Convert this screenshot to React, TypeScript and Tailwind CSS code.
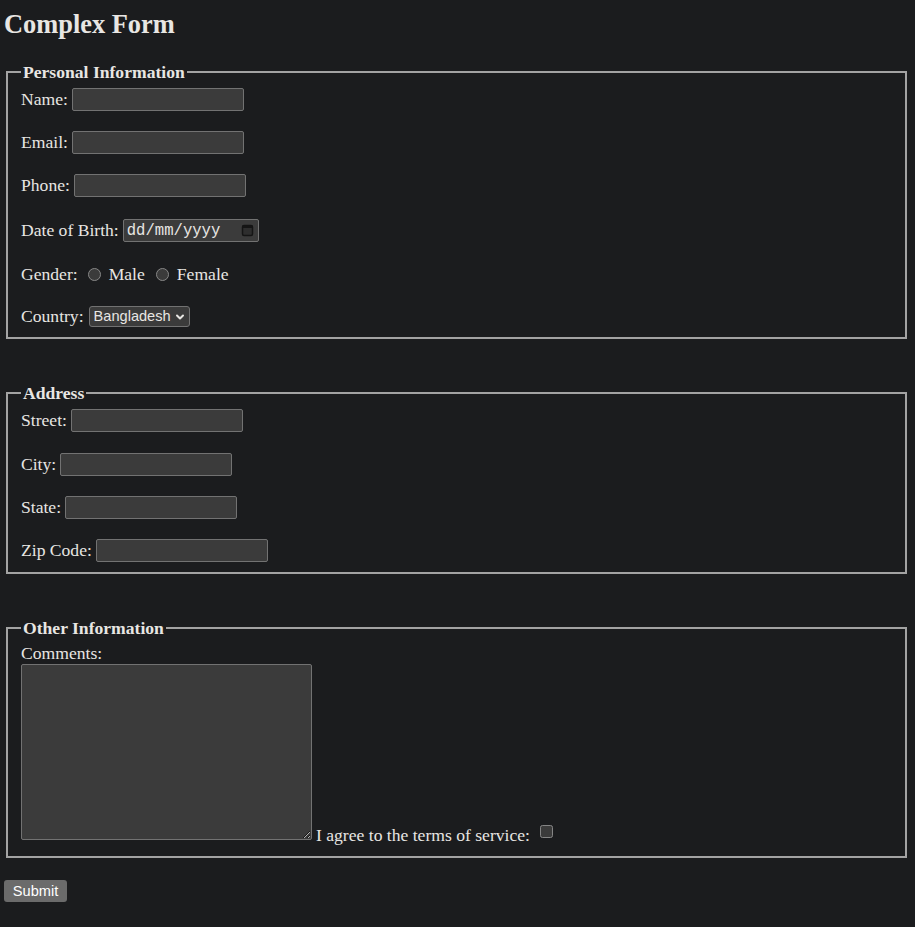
import { ChevronDown } from 'lucide-react';

const inputBox =
  "h-[23px] w-[172px] rounded-[2px] border border-[#727272] bg-[#3b3b3b] px-[2px] font-['Liberation_Sans',sans-serif] text-[14.6px] text-[#e8e6e3] outline-none";

const TextRow = ({ label, id, type = 'text', className = '' }: { label: string; id: string; type?: string; className?: string }) => (
  <div className={`flex h-[23px] items-center gap-[4px] ${className}`}>
    <label htmlFor={id} className="-mt-[2px]">{label}</label>
    <input id={id} name={id} type={type} className={inputBox} />
  </div>
);

const CalendarIcon = () => (
  <svg width="13" height="13" viewBox="0 0 13 13" fill="none">
    <rect x="1.5" y="1.5" width="10" height="10" rx="1.5" fill="#2e2e2e" stroke="#151515" strokeWidth="1.5" />
    <rect x="1.5" y="1.5" width="10" height="2.5" fill="#151515" />
  </svg>
);

const App = () => {
  return (
    <div className="min-h-screen bg-[#1b1c1e] pl-[4px] pr-[6px] pt-[9px] pb-[20px] font-['Liberation_Serif',serif] text-[17.6px] leading-[20px] text-[#e8e6e3] [color-scheme:dark]">
      <h2 className="mb-[23px] text-[26.4px] font-bold leading-[30px]">Complex Form</h2>

      <form onSubmit={(e) => e.preventDefault()}>
        <fieldset className="mx-[2px] border-2 border-[#a3a3a3] px-[13px] pb-[10px]">
          <legend className="px-[2px] font-bold leading-[20px]">Personal Information</legend>
          <div className="flex flex-col">
            <TextRow label="Name:" id="name" className="mt-[6px]" />
            <TextRow label="Email:" id="email" type="email" className="mt-[20px]" />
            <TextRow label="Phone:" id="phone" type="tel" className="mt-[20px]" />
            <div className="mt-[22px] flex h-[23px] items-center gap-[4px]">
              <label htmlFor="dob" className="-mt-[1px]">Date of Birth:</label>
              <div
                id="dob"
                className="flex h-[23px] w-[136px] items-center justify-between rounded-[2px] border border-[#727272] bg-[#3b3b3b] pl-[3px] pr-[4px] font-['Liberation_Mono',monospace] text-[15.6px]"
              >
                <span>dd/mm/yyyy</span>
                <CalendarIcon />
              </div>
            </div>
            <div className="mt-[22px] flex h-[20px] items-center">
              <span>Gender:</span>
              <input type="radio" name="gender" id="male" className="ml-[10px] h-[13px] w-[13px]" />
              <label htmlFor="male" className="ml-[8px]">Male</label>
              <input type="radio" name="gender" id="female" className="ml-[11px] h-[13px] w-[13px]" />
              <label htmlFor="female" className="ml-[8px]">Female</label>
            </div>
            <div className="mt-[22px] flex h-[21px] items-center gap-[5px]">
              <label htmlFor="country" className="-mt-[1px]">Country:</label>
              <div className="flex h-[21px] w-[101px] items-center rounded-[3px] border border-[#727272] bg-[#3b3b3b] pl-[4px] pr-[3px]">
                <select
                  id="country"
                  className="w-full appearance-none bg-transparent font-['Liberation_Sans',sans-serif] text-[14.6px] leading-[17px] outline-none"
                >
                  <option>Bangladesh</option>
                  <option>India</option>
                  <option>Pakistan</option>
                </select>
                <ChevronDown size={12} strokeWidth={4} className="shrink-0" />
              </div>
            </div>
          </div>
        </fieldset>

        <fieldset className="mx-[2px] mt-[44px] border-2 border-[#a3a3a3] px-[13px] pb-[10px]">
          <legend className="px-[2px] font-bold leading-[20px]">Address</legend>
          <div className="flex flex-col">
            <TextRow label="Street:" id="street" className="mt-[6px]" />
            <TextRow label="City:" id="city" className="mt-[21px]" />
            <TextRow label="State:" id="state" className="mt-[20px]" />
            <TextRow label="Zip Code:" id="zip" className="mt-[20px]" />
          </div>
        </fieldset>

        <fieldset className="mx-[2px] mt-[44px] border-2 border-[#a3a3a3] px-[13px] pb-[16px]">
          <legend className="px-[2px] font-bold leading-[20px]">Other Information</legend>
          <label htmlFor="comments" className="mt-[5px] block h-[20px]">Comments:</label>
          <div className="mt-[1px] flex items-end">
            <textarea
              id="comments"
              className="h-[176px] w-[291px] rounded-[2px] border border-[#727272] bg-[#3b3b3b] outline-none"
            />
            <label htmlFor="terms" className="-mb-[5px] ml-[4px]">I agree to the terms of service:</label>
            <input type="checkbox" id="terms" className="mb-[2px] ml-[10px] h-[13px] w-[13px]" />
          </div>
        </fieldset>

        <button
          type="submit"
          className="mt-[22px] h-[22px] w-[63px] rounded-[3px] bg-[#6b6b6b] font-['Liberation_Sans',sans-serif] text-[14.6px] text-white"
        >
          Submit
        </button>
      </form>
    </div>
  );
};

export default App;
